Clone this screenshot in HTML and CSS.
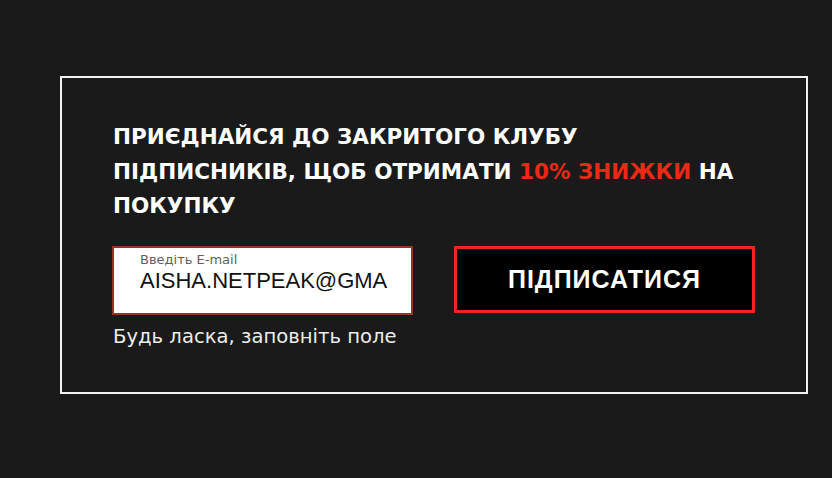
FILE: index.html
```html
<!DOCTYPE html>
<html lang="uk">
<head>
<meta charset="utf-8">
<link rel="stylesheet" href="styles.css">
</head>
<body>
<div class="popup">
  <h2 class="title">ПРИЄДНАЙСЯ ДО ЗАКРИТОГО КЛУБУ ПІДПИСНИКІВ, ЩОБ ОТРИМАТИ <span class="accent">10% ЗНИЖКИ</span> НА ПОКУПКУ</h2>
  <div class="form-row">
    <div class="field-col">
      <label class="field">
        <span class="field-label">Введіть E-mail</span>
        <span class="field-value">AISHA.NETPEAK@GMA</span>
      </label>
      <p class="hint">Будь ласка, заповніть поле</p>
    </div>
    <button class="subscribe">ПІДПИСАТИСЯ</button>
  </div>
</div>
</body>
</html>
```
FILE: styles.css
```css
html, body {
  margin: 0;
  padding: 0;
  background: #1a1a1a;
  width: 832px;
  height: 478px;
  overflow: hidden;
}
.popup {
  box-sizing: border-box;
  margin: 76px 0 0 60px;
  width: 748px;
  height: 318px;
  border: 2px solid #f2f2f2;
  padding: 42px 50px 0 51px;
}
.title {
  margin: 0;
  font-family: "DejaVu Sans", sans-serif;
  font-weight: 700;
  font-size: 21.5px;
  line-height: 34.5px;
  color: #ffffff;
  width: 645px;
}
.accent { color: #ec2816; }
.form-row {
  display: flex;
  gap: 41px;
  margin-top: 22px;
  margin-left: -1px;
}
.field-col { width: 301px; }
.field {
  box-sizing: border-box;
  display: flex;
  flex-direction: column;
  width: 301px;
  height: 69px;
  background: #ffffff;
  border: 2px solid #9a3422;
  padding: 4px 0 0 26px;
}
.field-label {
  font-family: "DejaVu Sans", sans-serif;
  font-size: 13px;
  line-height: 16px;
  color: #5e5e5e;
}
.field-value {
  font-family: "Liberation Sans", Arial, sans-serif;
  font-size: 22px;
  line-height: 26px;
  color: #111;
}
.hint {
  margin: 10px 0 0 1px;
  font-family: "DejaVu Sans", sans-serif;
  font-size: 19.6px;
  line-height: 24px;
  color: #ececec;
}
.subscribe {
  box-sizing: border-box;
  width: 301px;
  height: 67px;
  background: #000;
  border: 3px solid #ec2816;
  color: #fff;
  font-family: "Liberation Sans", Arial, sans-serif;
  font-weight: 700;
  font-size: 25px;
  letter-spacing: 1px;
  padding: 0;
  cursor: pointer;
}
```
